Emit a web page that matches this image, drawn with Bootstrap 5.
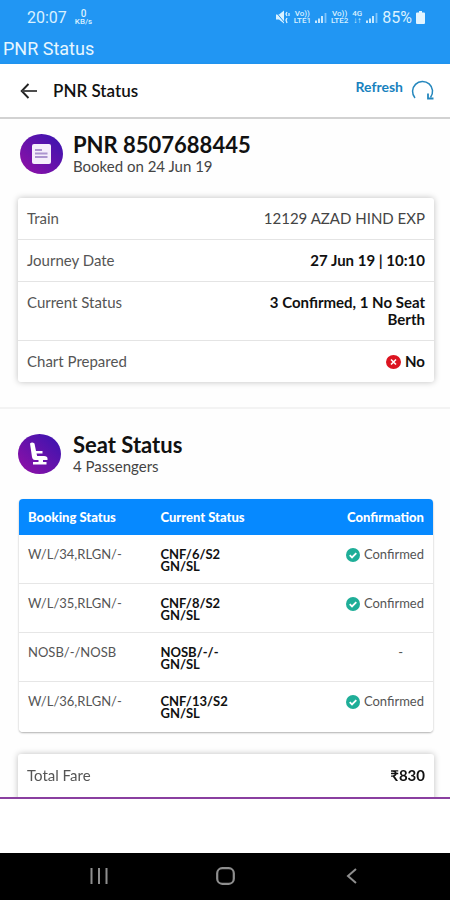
<!DOCTYPE html>
<html lang="en">
<head>
<meta charset="utf-8">
<meta name="viewport" content="width=device-width, initial-scale=1">
<title>PNR Status</title>
<link href="https://cdn.jsdelivr.net/npm/bootstrap@5.3.0/dist/css/bootstrap.min.css" rel="stylesheet">
<style>
  body { font-family: Lato, "Noto Sans", sans-serif; font-size: 15px; line-height: 17px; color: #111; }
  svg { display: block; flex: none; }
  .system-area { background: #2196f3; color: #d9f1ff; font-family: Roboto, sans-serif; }
  .status-strip { height: 34px; padding: 0 25px 0 27px; font-size: 16px; }
  .tiny-label { font-size: 8px; line-height: 7px; text-align: center; font-weight: 500; }
  .tiny-label b { font-size: 10px; line-height: 9px; font-weight: 500; }
  .app-title { height: 30px; padding: 0 3px; font-size: 18px; line-height: 30px; margin: 0; font-weight: 400; color: #e6f6ff; }
  .tool-strip { height: 55px; padding: 0 16px 0 20px; border-bottom: 2px solid #d2d2d2; box-shadow: 0 1px 3px #0002; }
  .tool-title { font-size: 17px; line-height: 20px; font-weight: 600; margin: 0; }
  .refresh { color: #1882be; font-size: 14px; line-height: 14px; font-weight: 700; }
  .scroller { min-height: 0; overflow-y: auto; scrollbar-width: none; background: #fefefe; }
  .scroller::-webkit-scrollbar { display: none; }
  .pane { padding: 0 16px 0 18px; }
  .pane-head { padding: 14px 2px 23px; gap: 10px; }
  .pane-head h2 { font-size: 22px; line-height: 24px; font-weight: 700; margin: 0; }
  .pane-head p { margin: 0; font-size: 15px; line-height: 18px; color: #444; }
  .pane + .pane { border-top: 2px solid #f3f3f3; }
  .pane + .pane .pane-head { padding: 24px 0; gap: 12px; }
  .sheet { border: 0; border-radius: 3px; box-shadow: 0 0 6px #00000040; background: #fff; }
  .sheet dl { margin: 0; }
  .sheet dl > div { padding: 12px 9px; border-bottom: 1px solid #e4e4e4; }
  .sheet dl > div:last-child { border-bottom: 0; }
  .sheet dt { font-weight: 400; color: #555; }
  .sheet dd { margin: 0; font-weight: 700; text-align: right; max-width: 170px; }
  .sheet .plain { font-weight: 400; color: #444; max-width: none; }
  .first-sheet { margin-bottom: 25px; }
  .fare-sheet { padding: 1px 0 12px; }
  .seat-box { margin: 0 1px 22px; border-radius: 4px; overflow: hidden; box-shadow: 0 1px 2px #00000050; background: #fff; }
  .seat-table { table-layout: fixed; margin: 0; width: 100%; font-size: 13px; line-height: 12px; }
  .seat-table th { background: #0689ff; color: #fff; font-weight: 900; padding: 12px 9px; border: 0; }
  .seat-table td { padding: 13px 9px 11px; border-bottom: 1px solid #e6e6e6; color: #555; vertical-align: top; background: #fff; }
  .seat-table tr:last-child td { border-bottom: 0; padding-bottom: 13px; }
  .seat-table td.now { font-weight: 700; color: #111; }
  .seat-table td.none-yet { padding-right: 30px; }
  .col-a { width: 32%; } .col-b { width: 34%; }
  .ad-slot { height: 57px; border-top: 2px solid #8a3fa0; background: #fff; }
  .nav-keys { height: 48px; background: #000; padding: 0 36px; }
  .nav-keys button { background: none; border: 0; padding: 0; flex: 1; display: flex; justify-content: center; }
</style>
<script src="https://cdn.jsdelivr.net/npm/bootstrap@5.3.0/dist/js/bootstrap.bundle.min.js"></script>
</head>
<body>
<svg width="0" height="0" class="position-absolute" aria-hidden="true">
  <defs>
    <linearGradient id="violet" x1="0" y1="1" x2="1" y2="0"><stop offset="0" stop-color="#9410a6"/><stop offset="1" stop-color="#3614b0"/></linearGradient>
    <symbol id="tick" viewBox="0 0 14 14"><circle cx="7" cy="7" r="7" fill="#1fae98"/><path d="M3.7 7.2l2.3 2.2 4.3-4.3" fill="none" stroke="#fff" stroke-width="1.8"/></symbol>
    <symbol id="bars" viewBox="0 0 12 12"><path d="M1 12V9.500M4 12V7.500" stroke="#d9f1ff" stroke-width="1.800"/><path d="M7 12V5" stroke="#d9f1ff" stroke-width="1.800"/><path d="M10.500 12V2" stroke="#7fc4fa" stroke-width="1.800"/></symbol>
  </defs>
</svg>
<div class="vh-100 d-flex flex-column">
  <header>
    <div class="system-area">
      <div class="status-strip d-flex align-items-center justify-content-between">
        <div class="d-flex align-items-center gap-2">
          <span>20:07</span>
          <span class="tiny-label"><b>0</b><br>KB/s</span>
        </div>
        <div class="d-flex align-items-center gap-1">
          <svg width="15" height="14" viewBox="0 0 15 14"><path d="M1 4.500h3l5-4v13L4 9.500H1z" fill="#d9f1ff"/><path d="M0 1l10 12" stroke="#2196f3" stroke-width="1"/><path d="M12 2l-1 2 1 2M12 8l-1 2 1 3M14 3v3" fill="none" stroke="#d9f1ff" stroke-width="1.300"/></svg>
          <span class="tiny-label">Vo))<br>LTE1</span>
          <svg width="12" height="12"><use href="#bars"/></svg>
          <span class="tiny-label">Vo))<br>LTE2</span>
          <span class="tiny-label">4G<br>↓↑</span>
          <svg width="12" height="12"><use href="#bars"/></svg>
          <span>85%</span>
          <svg width="9" height="13" viewBox="0 0 9 13"><path d="M3 0h3v1.500h2a1 1 0 0 1 1 1V12a1 1 0 0 1-1 1H1a1 1 0 0 1-1-1V2.500a1 1 0 0 1 1-1h2z" fill="#e3f5ff"/></svg>
        </div>
      </div>
      <h1 class="app-title">PNR Status</h1>
    </div>
    <div class="tool-strip d-flex align-items-center justify-content-between bg-white">
      <div class="d-flex align-items-center gap-3">
        <button class="btn p-0 border-0" aria-label="Back"><svg width="17" height="16" viewBox="0 0 17 16" fill="none" stroke="#222" stroke-width="1.900"><path d="M8.500 1L1.700 8l6.800 7"/><path d="M2 8h15" stroke="#444"/></svg></button>
        <p class="tool-title">PNR Status</p>
      </div>
      <button class="refresh btn p-0 border-0 d-flex align-items-start gap-2"><span>Refresh</span>
        <svg width="23" height="21" viewBox="0 0 23 21" fill="none" stroke="#2587bd" stroke-width="1.500"><path d="M4 18A10 10 0 1 1 19.500 17.500"/><path d="M17 13.500v5h5.500" stroke-width="1.800"/></svg>
      </button>
    </div>
  </header>

  <main class="scroller flex-grow-1">
    <section class="pane">
      <div class="pane-head d-flex align-items-center">
        <svg width="43" height="40" viewBox="0 0 43 40"><ellipse cx="21.500" cy="20" rx="21.500" ry="20" fill="url(#violet)"/><rect x="12" y="10" width="19" height="20" rx="2" fill="#f5eefb"/><path d="M15 16h7M15 19.500h12.500M15 23h12.500" stroke="#ac94cf" stroke-width="1.800"/></svg>
        <div><h2>PNR 8507688445</h2><p>Booked on 24 Jun 19</p></div>
      </div>
      <div class="sheet card first-sheet">
        <dl>
          <div class="d-flex justify-content-between"><dt>Train</dt><dd class="plain">12129 AZAD HIND EXP</dd></div>
          <div class="d-flex justify-content-between"><dt>Journey Date</dt><dd>27 Jun 19 | 10:10</dd></div>
          <div class="d-flex justify-content-between"><dt>Current Status</dt><dd>3 Confirmed, 1 No Seat Berth</dd></div>
          <div class="d-flex justify-content-between"><dt>Chart Prepared</dt><dd class="d-flex align-items-center gap-1"><svg width="15" height="14" viewBox="0 0 15 14"><ellipse cx="7.500" cy="7" rx="7.500" ry="7" fill="#dc1420"/><path d="M5 4.500l5 5M10 4.500l-5 5" stroke="#fff" stroke-width="1.600"/></svg>No</dd></div>
        </dl>
      </div>
    </section>

    <section class="pane">
      <div class="pane-head d-flex align-items-center">
        <svg width="43" height="40" viewBox="0 0 43 40"><ellipse cx="21.500" cy="20" rx="21.500" ry="20" fill="url(#violet)"/><path d="M12 9.500q2-2 4.500 0l1.500 7.500h6.500v2.500h-6l.7 2.500H26q3.500 0 3.500 2.500v1.500H25V28h3.500v2.500H15V28h5.500v-2H17q-2.500 0-3-3z" fill="#fff"/></svg>
        <div><h2>Seat Status</h2><p>4 Passengers</p></div>
      </div>
      <div class="seat-box">
        <table class="table seat-table">
          <thead><tr><th class="col-a" scope="col">Booking Status</th><th class="col-b" scope="col">Current Status</th><th class="text-end" scope="col">Confirmation</th></tr></thead>
          <tbody>
            <tr><td>W/L/34,RLGN/-</td><td class="now">CNF/6/S2<br>GN/SL</td><td><span class="d-flex justify-content-end gap-1"><svg width="14" height="14"><use href="#tick"/></svg>Confirmed</span></td></tr>
            <tr><td>W/L/35,RLGN/-</td><td class="now">CNF/8/S2<br>GN/SL</td><td><span class="d-flex justify-content-end gap-1"><svg width="14" height="14"><use href="#tick"/></svg>Confirmed</span></td></tr>
            <tr><td>NOSB/-/NOSB</td><td class="now">NOSB/-/-<br>GN/SL</td><td class="none-yet text-end">-</td></tr>
            <tr><td>W/L/36,RLGN/-</td><td class="now">CNF/13/S2<br>GN/SL</td><td><span class="d-flex justify-content-end gap-1"><svg width="14" height="14"><use href="#tick"/></svg>Confirmed</span></td></tr>
          </tbody>
        </table>
      </div>
      <div class="sheet card fare-sheet">
        <dl><div class="d-flex justify-content-between"><dt>Total Fare</dt><dd>₹830</dd></div></dl>
      </div>
    </section>
  </main>

  <div class="ad-slot"></div>
  <nav class="nav-keys d-flex align-items-center" aria-label="System">
    <button aria-label="Recent apps"><svg width="18" height="16" viewBox="0 0 18 16"><path d="M1.500 0v16M9 0v16M16.500 0v16" stroke="#8e8e8e" stroke-width="2"/></svg></button>
    <button aria-label="Home"><svg width="19" height="18" viewBox="0 0 19 18"><rect x="1.200" y="1.200" width="16.600" height="15.600" rx="5" fill="none" stroke="#8e8e8e" stroke-width="2.200"/></svg></button>
    <button aria-label="Back to previous app"><svg width="11" height="16" viewBox="0 0 11 16"><path d="M10 1L2 8l8 7" fill="none" stroke="#8e8e8e" stroke-width="2"/></svg></button>
  </nav>
</div>
</body>
</html>
